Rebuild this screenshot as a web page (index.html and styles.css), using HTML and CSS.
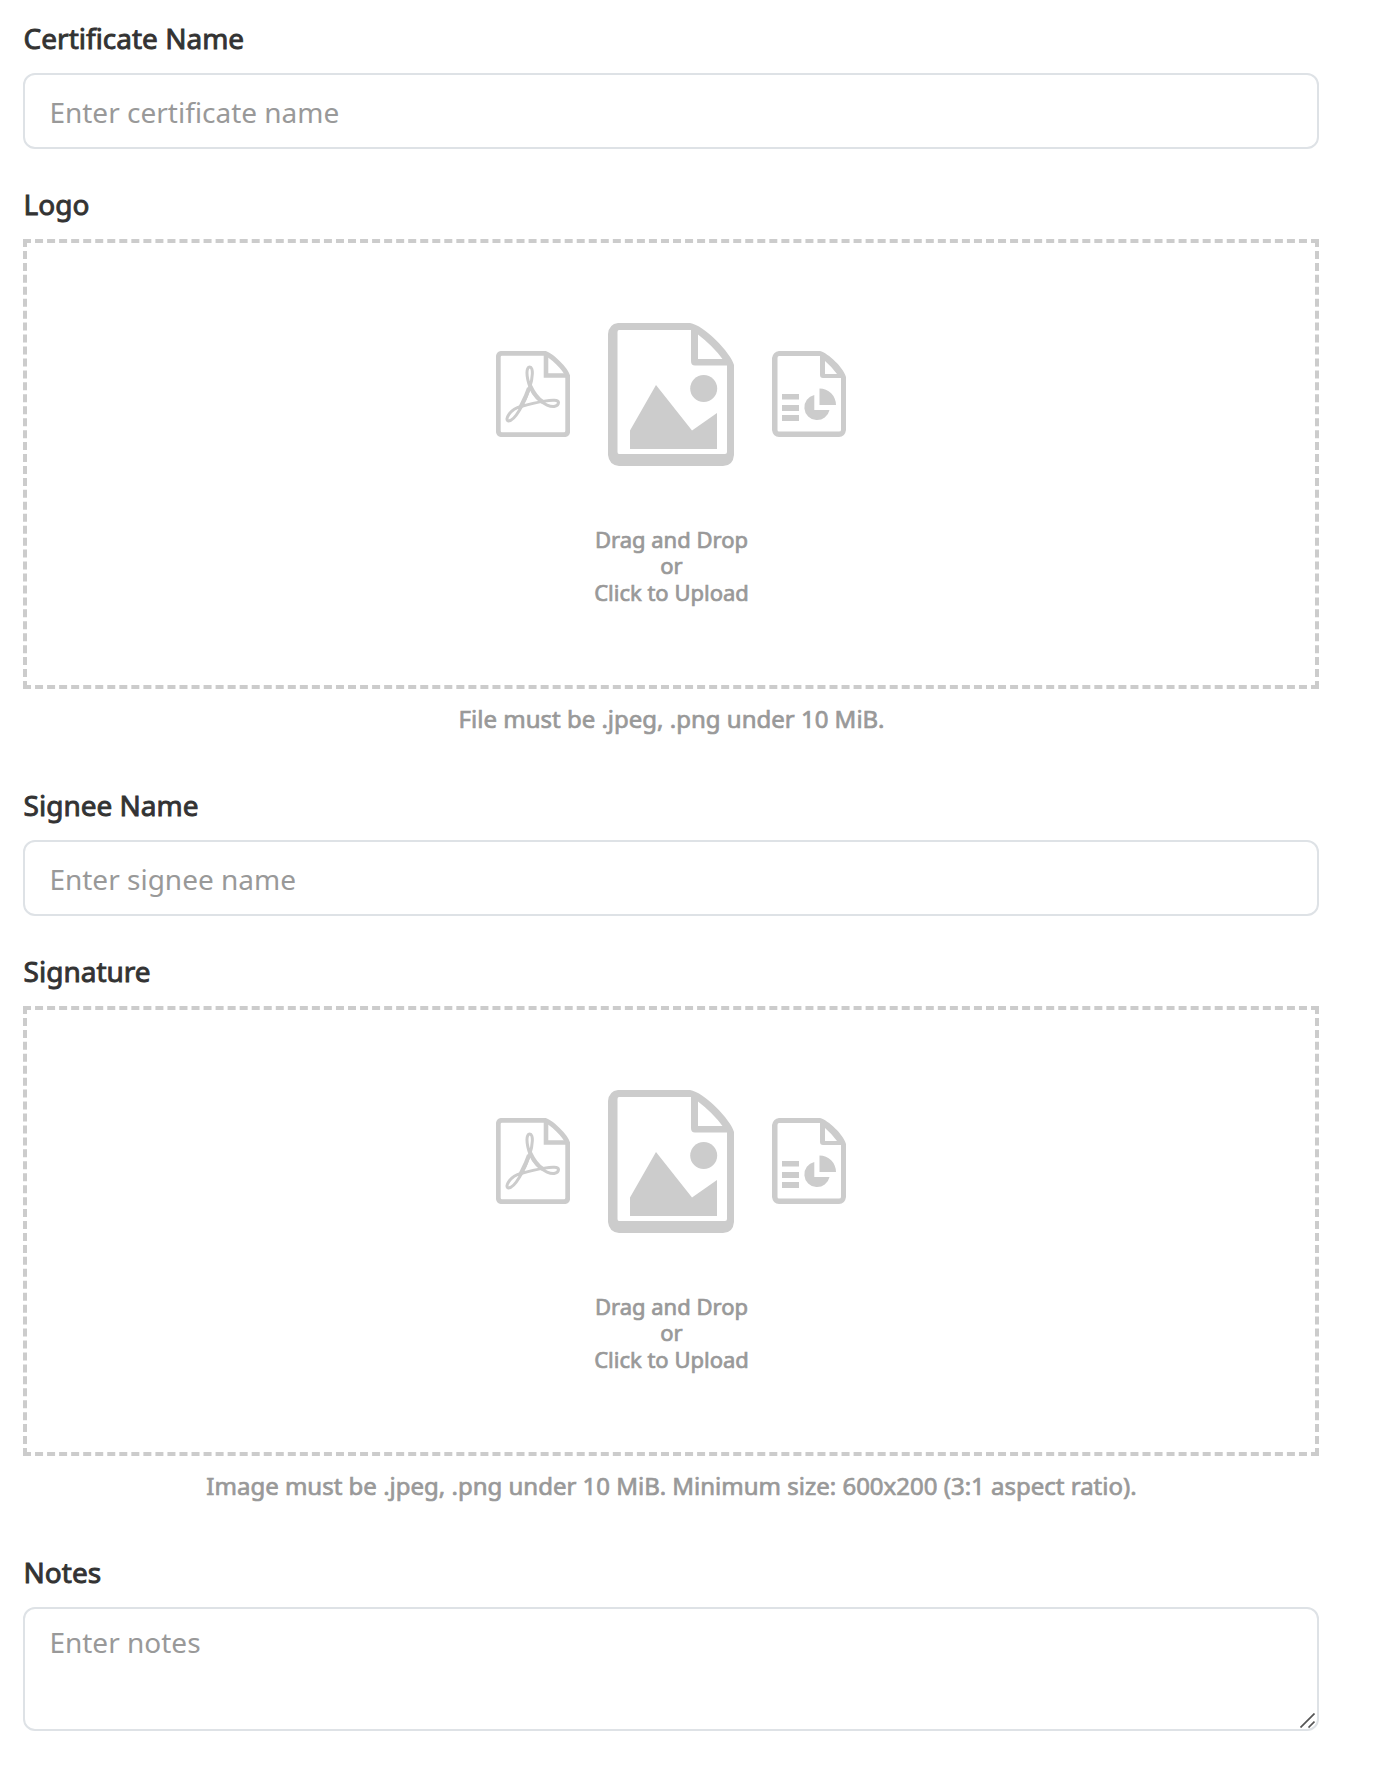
FILE: index.html
```html
<!DOCTYPE html>
<html lang="en">
<head>
<meta charset="utf-8">
<title>Certificate</title>
<link rel="stylesheet" href="styles.css">
</head>
<body>
<svg class="defs" aria-hidden="true">
  <symbol id="pdf" viewBox="0 0 74 86">
    <path d="M6 2.300H49C56 5 69 17 71.700 25V80Q71.700 83.700 68 83.700H6Q2.300 83.700 2.300 80V6Q2.300 2.300 6 2.300Z" fill="none" stroke="currentColor" stroke-width="4.800"/>
    <path d="M50 3V24.500H71" fill="none" stroke="currentColor" stroke-width="4.600"/>
    <path d="M34 36C30 25 30 16 33.800 16C37.500 16 37 27 33.500 37C29 51 19 70 12.500 70C8 69 14 58 25 55.500C38 52 62 46 62.500 51.500C62 60 42 55 34 36Z" fill="none" stroke="currentColor" stroke-width="3"/>
    <path d="M33.800 34C38 43 42 48 47 51M33 37C30 46 27 51 24 57" fill="none" stroke="currentColor" stroke-width="4"/>
  </symbol>
  <symbol id="image" viewBox="0 0 126 143">
    <path fill="currentColor" fill-rule="evenodd" d="M10 0H82C96 2 123 30 126 42V132Q125 143 115 143H11Q1 142 0 132V11Q1 1 10 0ZM11 7Q9.500 7 9.500 9V129Q9.500 131 11 131H117Q119 131 119 129V42.500H87Q83 42.500 83 38V7ZM90 11.500V36H114.500Q105 23 90 11.500Z"/>
    <path fill="currentColor" d="M22 126V107.500L48 62L84 107.500L109 90V126Z"/>
    <circle cx="95.700" cy="65.500" r="13.500" fill="currentColor"/>
  </symbol>
  <symbol id="report" viewBox="0 0 74 86">
    <path fill="currentColor" fill-rule="evenodd" d="M7 0H48C56 2 72 17 74 26V79Q73 86 67 86H7Q1 86 0 79V7Q1 1 7 0ZM7 5Q5.500 5 5.500 7V79Q5.500 80.500 7 80.500H67Q69 80.500 69 79V27H51Q48 27 48 24V5ZM53 10V23H65Q60 16 53 10Z"/>
    <path fill="currentColor" d="M10 43h17v5.500H10zM10 54h17v6H10zM10 64h17v6H10zM42.300 44V59H57.500A12.700 12.700 0 1 1 42.300 44ZM47.500 37.500A16.500 16.500 0 0 1 64 54H47.500Z"/>
  </symbol>
</svg>
<form class="form">
  <div class="field">
    <label class="label" for="cert">Certificate Name</label>
    <input class="input" id="cert" type="text" placeholder="Enter certificate name">
  </div>
  <div class="field field-upload">
    <div class="label">Logo</div>
    <div class="dropzone">
      <div class="icons">
        <svg class="icon-small"><use href="#pdf"/></svg>
        <svg class="icon-large"><use href="#image"/></svg>
        <svg class="icon-small"><use href="#report"/></svg>
      </div>
      <div class="prompt">Drag and Drop<br>or<br>Click to Upload</div>
    </div>
    <div class="hint">File must be .jpeg, .png under 10 MiB.</div>
  </div>
  <div class="field">
    <label class="label" for="signee">Signee Name</label>
    <input class="input" id="signee" type="text" placeholder="Enter signee name">
  </div>
  <div class="field field-upload">
    <div class="label">Signature</div>
    <div class="dropzone">
      <div class="icons">
        <svg class="icon-small"><use href="#pdf"/></svg>
        <svg class="icon-large"><use href="#image"/></svg>
        <svg class="icon-small"><use href="#report"/></svg>
      </div>
      <div class="prompt">Drag and Drop<br>or<br>Click to Upload</div>
    </div>
    <div class="hint">Image must be .jpeg, .png under 10 MiB. Minimum size: 600x200 (3:1 aspect ratio).</div>
  </div>
  <div class="field notes">
    <label class="label" for="notes">Notes</label>
    <textarea class="input textarea" id="notes" placeholder="Enter notes"></textarea>
    <svg class="grip" viewBox="0 0 15 15"><path d="M.5 14.500L14.500 .5M8.500 14.500L14.500 8.500" stroke="#555" stroke-width="1.700"/></svg>
  </div>
</form>
</body>
</html>
```

FILE: styles.css
```css
* { box-sizing: border-box; }
body {
  margin: 0;
  background: #fff;
  font-family: "Noto Sans", sans-serif;
}
.defs { display: none; }
.form {
  width: 1342px;
  padding: 17px 23px 0;
}
.field { margin-bottom: 34px; }
.field-upload { margin-bottom: 47px; }
.label {
  display: block;
  margin-bottom: 14px;
  padding-left: 0.6px;
  color: #333;
  font-size: 28px;
  line-height: 42px;
  -webkit-text-stroke: 0.9px #333;
}
.input {
  display: block;
  width: 100%;
  height: 76px;
  padding: 2px 24.4px 0;
  border: 2px solid #dee2e6;
  border-radius: 12px;
  background: #fff;
  font: 28px/42px "Noto Sans", sans-serif;
  outline: none;
}
.input::placeholder { color: #999; opacity: 1; }
.textarea {
  height: 124px;
  padding: 12px 24.4px;
  resize: none;
}
.dropzone {
  display: flex;
  flex-direction: column;
  align-items: center;
  height: 450px;
  padding-top: 80px;
  border: 4px dashed #ccc;
}
.icons {
  display: flex;
  align-items: center;
  gap: 38px;
  height: 143px;
  color: #ccc;
}
.icon-small {
  width: 74px;
  height: 86px;
  margin-bottom: 1px;
}
.icon-large { width: 126px; height: 143px; }
.prompt {
  margin-top: 60px;
  padding-left: 1px;
  color: #999;
  font-size: 22px;
  line-height: 26.4px;
  text-align: center;
  -webkit-text-stroke: 0.7px #999;
}
.hint {
  margin-top: 12px;
  padding-left: 1px;
  color: #999;
  font-size: 24px;
  line-height: 36px;
  text-align: center;
  -webkit-text-stroke: 0.7px #999;
}
.notes { position: relative; }
.grip {
  position: absolute;
  right: 4px;
  bottom: 3px;
  width: 15px;
  height: 15px;
}
```
